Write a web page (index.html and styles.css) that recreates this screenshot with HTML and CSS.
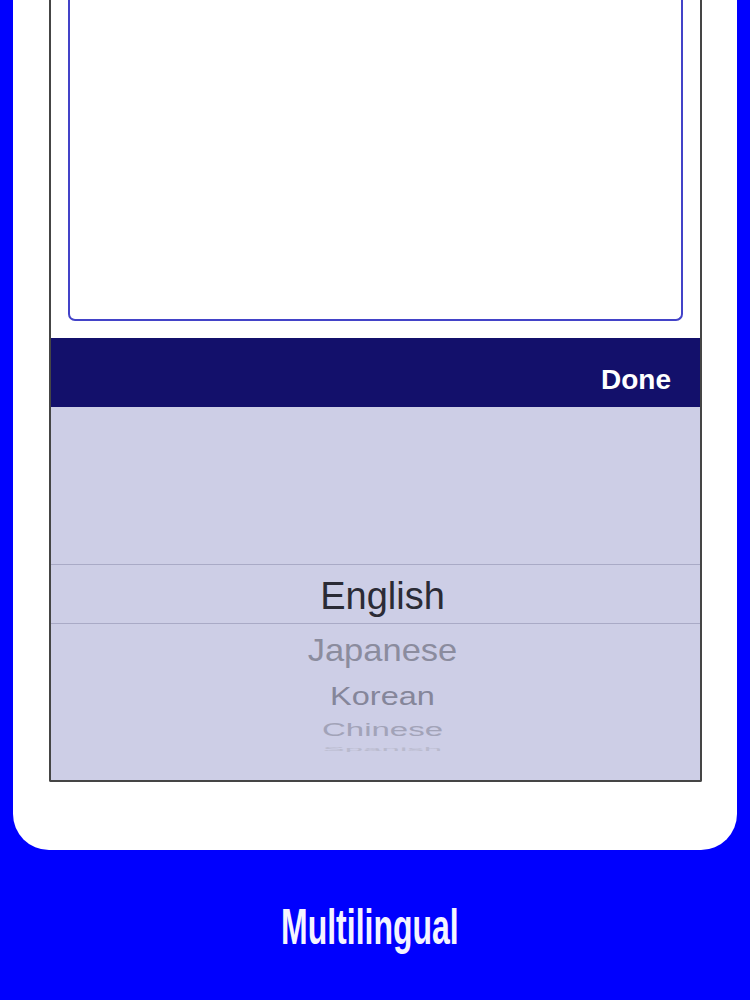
FILE: index.html
```html
<!DOCTYPE html>
<html>
<head>
<meta charset="utf-8">
<link rel="stylesheet" href="styles.css">
</head>
<body>
<div class="page">
  <div class="device">
    <div class="screen">
      <div class="editor-area">
        <div class="textbox"></div>
      </div>
      <div class="toolbar"><span class="done">Done</span></div>
      <div class="picker">
        <div class="band"></div>
        <div class="row r-sel">English</div>
        <div class="row r1">Japanese</div>
        <div class="row r2">Korean</div>
        <div class="row r3">Chinese</div>
        <div class="row r4">Spanish</div>
      </div>
    </div>
  </div>
  <div class="caption"><span class="caption-text">Multilingual</span></div>
</div>
</body>
</html>
```
FILE: styles.css
```css
html, body {
  margin: 0;
  padding: 0;
  background: #0000fe;
}
.page {
  width: 750px;
  height: 1000px;
  background: #0000fe;
  overflow: hidden;
  display: flex;
  flex-direction: column;
}
.device {
  margin-left: 13px;
  width: 724px;
  height: 850px;
  box-sizing: border-box;
  background: #ffffff;
  border-radius: 0 0 36px 36px;
  padding: 0 35px 68px 36px;
  display: flex;
}
.screen {
  flex: 1;
  border: 2px solid #454545;
  border-top: none;
  border-radius: 0 0 2px 2px;
  display: flex;
  flex-direction: column;
  background: #ffffff;
}
.editor-area {
  height: 338px;
  box-sizing: border-box;
  padding: 0 17px 17px 17px;
  display: flex;
}
.textbox {
  flex: 1;
  border: 2px solid #4343c8;
  border-top: none;
  border-radius: 0 0 7px 7px;
}
.toolbar {
  height: 69px;
  background: #13106b;
  display: flex;
  align-items: center;
  justify-content: flex-end;
  padding-right: 29px;
}
.done {
  color: #ffffff;
  font-family: "Liberation Sans", Arial, sans-serif;
  font-weight: bold;
  font-size: 28px;
  padding-top: 14px;
}
.picker {
  flex: 1;
  background: #cdcee6;
  position: relative;
  overflow: hidden;
  font-family: "Liberation Sans", Arial, sans-serif;
  text-align: center;
  padding-top: 158px;
  padding-left: 14px;
}
.band {
  position: absolute;
  left: 0;
  right: 0;
  top: 157px;
  height: 58px;
  border-top: 1px solid #a9aac6;
  border-bottom: 1px solid #a9aac6;
}
.row {
  line-height: 1;
}
.r-sel {
  height: 60px;
  line-height: 62px;
  font-size: 38px;
  color: #2b2b35;
}
.r1 {
  font-size: 34.5px;
  color: #8b8c9e;
  height: 48px;
  line-height: 48px;
  transform: scaleY(0.92);
  margin-top: 1px;
}
.r2 {
  font-size: 32.5px;
  color: #85869a;
  height: 40px;
  line-height: 40px;
  transform: scaleY(0.78);
  margin-top: 2px;
}
.r3 {
  font-size: 33px;
  color: #a2a3b8;
  height: 28px;
  line-height: 28px;
  transform: scaleY(0.55);
}
.r4 {
  font-size: 33px;
  color: #b9bacd;
  height: 10px;
  line-height: 10px;
  transform: scaleY(0.18);
}
.caption {
  flex: 1;
  display: flex;
  justify-content: center;
  align-items: center;
  padding-top: 4px;
  padding-right: 10px;
}
.caption-text {
  color: #f4f4ff;
  font-family: "Liberation Sans", Arial, sans-serif;
  font-weight: bold;
  font-size: 50px;
  display: inline-block;
  transform: scaleX(0.64);
}
```
